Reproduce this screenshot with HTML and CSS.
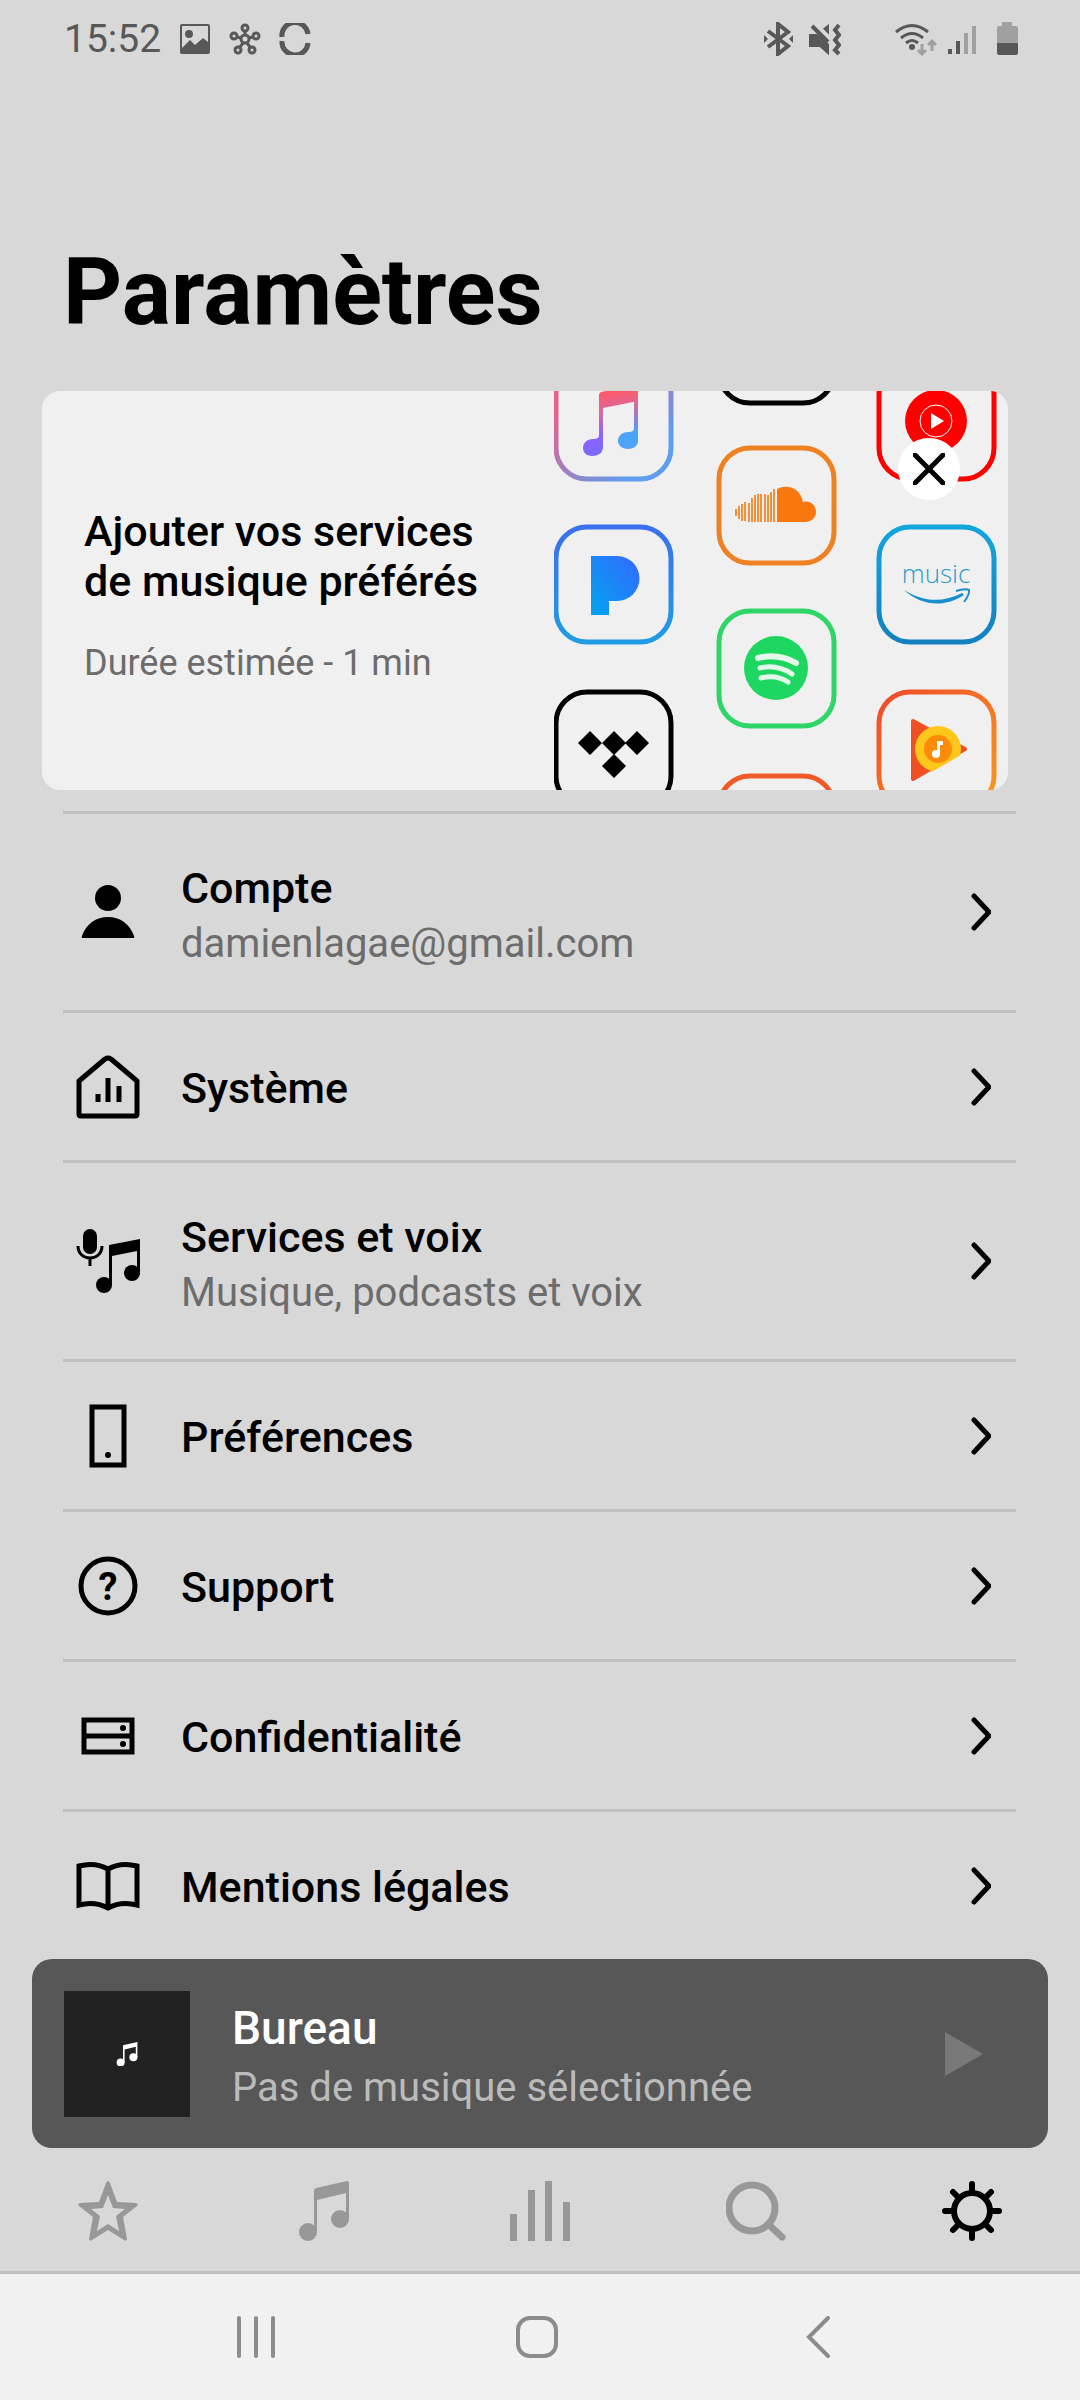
FILE: index.html
```html
<!DOCTYPE html>
<html lang="fr">
<head>
  <meta charset="UTF-8">
  <meta name="viewport" content="width=device-width, initial-scale=1.0">
  <title>Paramètres</title>
  <link rel="stylesheet" href="styles.css">
</head>
<body>
  <header class="status-bar">
    <span class="time">15:52</span>
    <svg width="32" height="32" viewBox="0 0 32 32"><path fill-rule="evenodd" d="M3 1h26a2 2 0 0 1 2 2v26a2 2 0 0 1-2 2H3a2 2 0 0 1-2-2V3a2 2 0 0 1 2-2zm0 2v22l8-8 5 5 8-7 5 4V3z"/><circle cx="10" cy="11" r="4"/></svg>
    <svg class="line" width="32" height="32" viewBox="0 0 32 32" stroke-width="3"><circle cx="16" cy="16" r="4"/><circle cx="16" cy="5" r="3"/><circle cx="5" cy="13" r="3"/><circle cx="27" cy="13" r="3"/><circle cx="9" cy="27" r="3"/><circle cx="23" cy="27" r="3"/><path d="M16 8v4M8 14l4 1M24 14l-4 1M11 24l3-4M21 24l-3-4"/></svg>
    <svg class="line" width="32" height="32" viewBox="0 0 32 32" stroke-width="5"><path d="M3 14a13 13 0 0 1 26-3M3 18a13 13 0 0 0 26 2"/></svg>
    <div class="status-right">
      <svg class="line" width="32" height="34" viewBox="0 0 32 34" stroke-width="4"><path d="M5 9l20 15-10 8V2l10 8L5 25"/><path class="solid" d="M1 13v8l4-4zM30 13v8l-4-4z"/></svg>
      <svg width="32" height="34" viewBox="0 0 32 34"><path d="M0 12h8l4-3 8 8v16l-9-8H0zM12 8l8-6v14z"/><path class="cut" d="M2 1l20 20"/><path d="M0 12h8l12 10v11l-9-8H0z"/><path class="line" stroke-width="4" d="M3 4l16 16M30 3l-4 5 4 5-4 5 4 5-4 5 4 4"/></svg>
      <svg class="wifi" width="39" height="34" viewBox="0 0 39 34"><path class="line" stroke-width="3" d="M1 10q16-13 32 0M6 16q11-9 22 0M11 21q6-5 12 0"/><circle cx="17" cy="25" r="3"/><path class="line faded" stroke-width="3" d="M27 22v9M23 28l4 4 4-4M37 29v-9M33 23l4-4 4 4"/></svg>
      <svg class="line" width="28" height="34" viewBox="0 0 28 34" stroke-width="4"><path d="M2 27v5M10 19v13"/><path class="faded" d="M18 11v21M26 4v28"/></svg>
      <svg width="36" height="34" viewBox="0 0 36 34"><path fill="#a0a0a0" d="M7 6a2 2 0 0 1 2-2h3V0h10v4h4a2 2 0 0 1 2 2v16H7z"/><path d="M7 21h21v10a2 2 0 0 1-2 2H9a2 2 0 0 1-2-2z"/></svg>
    </div>
  </header>

  <main>
    <h1>Paramètres</h1>

    <section class="banner">
      <div class="banner-text">
        <h2>Ajouter vos services<br>de musique préférés</h2>
        <p>Durée estimée - 1 min</p>
      </div>
      <svg class="services" width="454" height="399" viewBox="0 0 454 399">
        <defs>
          <linearGradient id="apple-frame" x1="0" y1="0" x2="1" y2="1"><stop offset=".2" stop-color="#e8608c"/><stop offset=".8" stop-color="#5f9dee"/></linearGradient>
          <linearGradient id="apple-note" gradientUnits="userSpaceOnUse" x1="50" y1="0" x2="60" y2="62"><stop offset="0" stop-color="#ff5b62"/><stop offset=".35" stop-color="#d967a4"/><stop offset=".7" stop-color="#8b64ff"/><stop offset="1" stop-color="#7a6aff"/></linearGradient>
          <linearGradient id="apple-right" gradientUnits="userSpaceOnUse" x1="0" y1="5" x2="0" y2="55"><stop offset="0" stop-color="#f26378"/><stop offset=".6" stop-color="#6a90f0"/><stop offset="1" stop-color="#4da3f8"/></linearGradient>
          <linearGradient id="pandora" x1="1" y1="0" x2="0" y2="1"><stop offset="0" stop-color="#3668ff"/><stop offset="1" stop-color="#00a5ee"/></linearGradient>
          <linearGradient id="pandora-frame" x1="0" y1="0" x2="0" y2="1"><stop offset="0" stop-color="#3b70ee"/><stop offset="1" stop-color="#1f9ce4"/></linearGradient>
          <linearGradient id="amazon" x1="0" y1="0" x2="0" y2="1"><stop offset="0" stop-color="#12a6dc"/><stop offset="1" stop-color="#1480c0"/></linearGradient>
          <linearGradient id="play-frame" x1="0" y1="0" x2="1" y2="1"><stop offset="0" stop-color="#ee4a2c"/><stop offset="1" stop-color="#fb9a1c"/></linearGradient>
          <clipPath id="play-clip"><path d="M357 310h62v47l-62 36z"/></clipPath>
        </defs>

        <!-- first column -->
        <rect class="tile" x="2" y="-27" width="115" height="115" rx="31" stroke="url(#apple-frame)"/>
        <path fill="url(#apple-note)" d="M45 4q0-2 2-3l5-1h32v10L49 17v40h-4z"/>
        <path fill="url(#apple-right)" d="M80 0h4v50h-4z"/>
        <path fill="url(#apple-note)" d="M49 48v8c0 6-5 9-11 9-5 0-9-3-9-8s4-9 10-9c4 0 6-1 6-4z"/>
        <path fill="#4da3f8" d="M84 38v12c0 5-5 8-10 8s-10-3-10-8 4-9 10-9c4 0 6-1 6-4z"/>
        <rect class="tile" x="2" y="136" width="115" height="115" rx="31" stroke="url(#pandora-frame)"/>
        <path fill="url(#pandora)" d="M37 165h26a22 22 0 0 1 0 45h-8v14H37z"/>
        <rect class="tile" x="2" y="301" width="115" height="115" rx="31" stroke="#000"/>
        <path d="M36 340l12 12-12 12-12-12zM60 340l12 12-12 12-12-12zM83 340l12 12-12 12-12-12zM60 363l12 12-12 12-12-12z"/>

        <!-- second column -->
        <rect class="tile" x="165" y="-103" width="115" height="115" rx="31" stroke="#000"/>
        <rect class="tile" x="165" y="57" width="115" height="115" rx="31" stroke="#ee8122"/>
        <path fill="#f8770f" d="M223 98c11-6 24 0 26 13 7-2 13 3 13 10 0 6-5 10-11 10h-28z"/>
        <path fill="none" stroke="#f8770f" stroke-width="2" opacity=".8" d="M182 118v7M185 115v13M188 113v17M191 111v19M195 112v19M198 107v24M201 104v27M204 103v28M207 103v28M211 103v28M214 104v27M217 101v30M220 98v33"/>
        <rect class="tile" x="165" y="220" width="115" height="115" rx="31" stroke="#2fd566"/>
        <circle cx="222" cy="277" r="32" fill="#1ed760"/>
        <path fill="none" stroke="#e4f7ea" stroke-linecap="round" stroke-width="6" d="M204 267q20-5 38 5"/>
        <path fill="none" stroke="#e4f7ea" stroke-linecap="round" stroke-width="5" d="M206 277q17-4 32 6M207 287q15-4 27 4"/>
        <rect class="tile" x="165" y="385" width="115" height="115" rx="31" stroke="#f05a28"/>

        <!-- third column -->
        <rect class="tile" x="325" y="-27" width="115" height="115" rx="31" stroke="#f00"/>
        <circle cx="382" cy="30" r="31" fill="#f00"/>
        <circle cx="382" cy="30" r="16" fill="none" stroke="#fff"/>
        <path fill="#fff" d="M377 22v16l13-8z"/>
        <rect class="tile" x="325" y="136" width="115" height="115" rx="31" stroke="url(#amazon)"/>
        <text class="amazon-name" x="382" y="192">music</text>
        <path fill="#168fcb" d="M350 199c19 12 39 13 58 3l2 2c-20 13-42 11-60-5z"/>
        <path fill="none" stroke="#168fcb" stroke-width="2" d="M402 200q9-3 13-1 1 4-5 12"/>
        <rect class="tile" x="325" y="301" width="115" height="115" rx="31" stroke="url(#play-frame)"/>
        <path fill="#f04e23" stroke="#f04e23" stroke-linejoin="round" stroke-width="4" d="M359 330l52 28-52 30z"/>
        <g clip-path="url(#play-clip)">
          <circle cx="384" cy="358" r="23" fill="#ffc61c"/>
          <circle cx="384" cy="358" r="14" fill="#fb8c0a"/>
        </g>
        <circle cx="382" cy="363" r="4" fill="#fff"/>
        <path fill="#fff" d="M383 350h6v4h-3v9h-3z"/>
      </svg>
      <button class="close" aria-label="Fermer">
        <svg width="32" height="32" viewBox="0 0 32 32"><path d="M2 2l28 28M30 2L2 30"/></svg>
      </button>
    </section>

    <nav class="settings">
      <a href="#compte" class="row tall">
        <svg class="icon" viewBox="0 0 64 64"><circle cx="32" cy="18" r="13"/><path d="M7 58q-2 0-1-2c4-12 14-19 26-19s22 7 26 19q1 2-1 2z"/></svg>
        <span class="label">Compte<small>damienlagae@gmail.com</small></span>
        <svg class="chevron" viewBox="0 0 20 38"><path d="M3 3l15 16L3 35"/></svg>
      </a>
      <a href="#systeme" class="row">
        <svg class="icon outline" viewBox="0 0 64 64"><path d="M3 26L29 4q3-2 6 0l26 22v33q0 2-2 2H5q-2 0-2-2z"/><path d="M22 39v8M32 23v24M43 31v16"/></svg>
        <span class="label">Système</span>
        <svg class="chevron" viewBox="0 0 20 38"><path d="M3 3l15 16L3 35"/></svg>
      </a>
      <a href="#services" class="row tall">
        <svg class="icon" viewBox="0 0 64 64"><rect x="7" y="0" width="14" height="25" rx="7"/><path class="thin" d="M2 17c0 16 24 16 24 0M14 29v8"/><path d="M33 16l31-6v33h-3V22l-25 5v29h-3z"/><circle cx="28" cy="56" r="8"/><circle cx="56" cy="44" r="8"/></svg>
        <span class="label">Services et voix<small>Musique, podcasts et voix</small></span>
        <svg class="chevron" viewBox="0 0 20 38"><path d="M3 3l15 16L3 35"/></svg>
      </a>
      <a href="#preferences" class="row">
        <svg class="icon outline" viewBox="0 0 64 64"><path stroke-linejoin="miter" d="M16 3h32v58H16z"/><circle class="dot" cx="32" cy="51" r="3"/></svg>
        <span class="label">Préférences</span>
        <svg class="chevron" viewBox="0 0 20 38"><path d="M3 3l15 16L3 35"/></svg>
      </a>
      <a href="#support" class="row">
        <svg class="icon outline" viewBox="0 0 64 64"><circle cx="32" cy="32" r="27"/><text class="question" x="32" y="46">?</text></svg>
        <span class="label">Support</span>
        <svg class="chevron" viewBox="0 0 20 38"><path d="M3 3l15 16L3 35"/></svg>
      </a>
      <a href="#confidentialite" class="row">
        <svg class="icon outline" viewBox="0 0 64 64"><path stroke-linejoin="miter" d="M8 16h48v32H8zM8 32h48"/><circle class="dot" cx="47" cy="24" r="3"/><circle class="dot" cx="47" cy="40" r="3"/></svg>
        <span class="label">Confidentialité</span>
        <svg class="chevron" viewBox="0 0 20 38"><path d="M3 3l15 16L3 35"/></svg>
      </a>
      <a href="#mentions" class="row">
        <svg class="icon outline" viewBox="0 0 64 64"><path stroke-linejoin="miter" d="M32 15C23 10 14 9 3 12v39c11-3 20-2 29 3 9-5 18-6 29-3V12c-11-3-20-2-29 3z"/><path d="M32 15v38"/></svg>
        <span class="label">Mentions légales</span>
        <svg class="chevron" viewBox="0 0 20 38"><path d="M3 3l15 16L3 35"/></svg>
      </a>
    </nav>
  </main>

  <section class="player">
    <div class="cover">
      <svg width="22" height="24" viewBox="0 0 52 60"><path d="M16 8l36-8v38h-4V12l-28 7v32h-4z"/><circle cx="10" cy="51" r="10"/><circle cx="42" cy="38" r="10"/></svg>
    </div>
    <div class="track">
      <strong>Bureau</strong>
      <span>Pas de musique sélectionnée</span>
    </div>
    <button class="play" aria-label="Lecture">
      <svg width="38" height="44" viewBox="0 0 38 44"><path d="M0 0l38 22L0 44z"/></svg>
    </button>
  </section>

  <nav class="tabs">
    <a href="#favoris" aria-label="Favoris"><svg width="60" height="60" viewBox="0 0 60 60"><path fill-rule="evenodd" d="M30 0q1 0 2 2l7 19 19 1q3 1 1 3L45 36l4 22q-1 3-3 1L30 49 14 59q-2 2-3-1l4-22L1 25q-2-2 1-3l19-1 7-19q1-2 2-2zm0 14l-5 13-12 1 9 7-3 15 11-7 11 7-3-15 9-7-12-1z"/></svg></a>
    <a href="#musique" aria-label="Musique"><svg width="52" height="60" viewBox="0 0 52 60"><path d="M16 9q0-1 2-2L49 0q2 0 2 2v36h-3V12L19 19v32h-3z"/><circle cx="10" cy="51" r="9"/><circle cx="42" cy="38" r="9"/></svg></a>
    <a href="#pieces" aria-label="Pièces"><svg width="60" height="60" viewBox="0 0 60 60"><path d="M0 33h7v27H0zM18 9h7v51h-7zM35 0h7v60h-7zM53 21h7v39h-7z"/></svg></a>
    <a href="#recherche" aria-label="Rechercher"><svg class="search" width="60" height="60" viewBox="0 0 60 60"><circle cx="26" cy="27" r="23"/><path d="M42 43l14 13"/></svg></a>
    <a href="#parametres" aria-label="Paramètres" class="active"><svg class="gear" width="60" height="60" viewBox="0 0 60 60"><circle cx="30" cy="30" r="18"/><path d="M30 3v7M30 50v7M3 30h7M50 30h7M11 11l5 5M44 44l5 5M49 11l-5 5M11 49l5-5"/></svg></a>
  </nav>

  <footer class="system-nav">
    <button aria-label="Applications récentes"><svg width="40" height="42" viewBox="0 0 40 42"><path d="M3 2v38M20 2v38M37 2v38"/></svg></button>
    <button aria-label="Accueil"><svg width="44" height="44" viewBox="0 0 44 44"><rect x="3" y="3" width="38" height="38" rx="12"/></svg></button>
    <button aria-label="Retour"><svg width="24" height="42" viewBox="0 0 24 42"><path d="M22 2L3 21l19 19"/></svg></button>
  </footer>
</body>
</html>
```
FILE: styles.css
```css
* {
  box-sizing: border-box;
}

body {
  margin: 0;
  min-height: 100vh;
  display: flex;
  flex-direction: column;
  background: #d8d8d8;
  color: #000;
  font-family: Roboto, "Liberation Sans", sans-serif;
}

svg {
  display: block;
  flex: none;
}

button {
  padding: 0;
  border: none;
  background: none;
  cursor: pointer;
}

a {
  color: inherit;
  text-decoration: none;
}

/* Status bar */
.status-bar {
  display: flex;
  align-items: center;
  gap: 18px;
  height: 78px;
  padding: 0 54px 0 64px;
  color: #585858;
  fill: #585858;
}

.time {
  font-size: 39px;
}

.status-bar .line {
  fill: none;
  stroke: #585858;
}

.status-bar .faded {
  stroke: #a0a0a0;
}

.status-bar .solid {
  fill: #585858;
  stroke: none;
}

.status-bar .cut {
  stroke: #d8d8d8;
  stroke-width: 9px;
}

.status-right {
  display: flex;
  gap: 14px;
  margin-left: auto;
}

.wifi {
  margin-left: 40px;
  overflow: visible;
}

/* Title */
h1 {
  margin: 161px 63px 44px;
  font-size: 92px;
  line-height: 108px;
  font-weight: 700;
}

/* Banner */
.banner {
  position: relative;
  display: flex;
  align-items: center;
  justify-content: space-between;
  margin: 0 72px 21px 42px;
  border-radius: 18px;
  background: #f0f0f0;
  overflow: hidden;
}

.banner-text {
  padding: 8px 0 0 42px;
}

.banner h2 {
  margin: 0 0 36px;
  font-size: 43px;
  line-height: 50px;
  font-weight: 500;
}

.banner p {
  margin: 0;
  font-size: 36px;
  line-height: 42px;
  color: #6c6c6c;
}

.tile {
  fill: none;
  stroke-width: 5px;
}

.amazon-name {
  font-family: "Open Sans", sans-serif;
  font-size: 26px;
  font-weight: 300;
  text-anchor: middle;
  fill: #2b9ccb;
}

.close {
  position: absolute;
  top: 47px;
  right: 48px;
  display: grid;
  place-items: center;
  width: 62px;
  height: 62px;
  border-radius: 50%;
  background: #fff;
}

.close svg {
  stroke: #000;
  stroke-width: 5px;
  stroke-linecap: round;
}

/* Settings list */
.settings {
  margin: 0 64px 0 63px;
}

.row {
  display: flex;
  align-items: center;
  height: 150px;
  padding: 0 25px 0 13px;
  border-top: 3px solid #c0c0c0;
}

.row.tall {
  height: 199px;
}

.icon {
  width: 64px;
  height: 64px;
}

.outline {
  fill: none;
  stroke: #000;
  stroke-width: 5px;
  stroke-linejoin: round;
}

.thin {
  fill: none;
  stroke: #000;
  stroke-width: 3px;
}

.dot {
  fill: #000;
  stroke: none;
}

.question {
  font-size: 38px;
  font-weight: 700;
  text-anchor: middle;
  fill: #000;
  stroke: none;
}

.label {
  flex: 1;
  padding: 3px 0 0 41px;
  font-size: 43px;
  line-height: 56px;
  font-weight: 500;
}

.tall .label {
  padding-top: 7px;
}

.label small {
  display: block;
  font-size: 40px;
  font-weight: 400;
  color: #6c6c6c;
}

.chevron {
  width: 20px;
  height: 38px;
  fill: none;
  stroke: #000;
  stroke-width: 5px;
  stroke-linecap: round;
}

/* Player */
.player {
  display: flex;
  align-items: center;
  height: 189px;
  margin: 0 32px;
  padding: 0 65px 0 32px;
  border-radius: 20px;
  background: #575757;
}

.cover {
  display: grid;
  place-items: center;
  width: 126px;
  height: 126px;
  background: #222;
}

.cover svg {
  fill: #fff;
}

.track {
  flex: 1;
  padding: 8px 0 0 42px;
}

.track strong,
.track span {
  display: block;
  line-height: 60px;
}

.track strong {
  font-size: 46px;
  font-weight: 500;
  color: #fff;
}

.track span {
  font-size: 40px;
  color: #bbb;
}

.play svg {
  fill: #797979;
}

/* Tabs */
.tabs {
  display: grid;
  grid-template-columns: repeat(5, 1fr);
  height: 126px;
  padding-top: 3px;
  border-bottom: 3px solid #c0c0c0;
}

.tabs a {
  display: grid;
  place-items: center;
  color: #989898;
}

.tabs a.active {
  color: #000;
}

.tabs svg {
  fill: currentColor;
}

.tabs .search,
.tabs .gear {
  fill: none;
  stroke: currentColor;
  stroke-width: 6px;
  stroke-linecap: round;
}

.tabs .search {
  stroke-width: 7px;
}

/* System navigation */
.system-nav {
  flex: 1;
  display: grid;
  grid-template-columns: repeat(3, 1fr);
  min-height: 126px;
  padding: 0 121px 0 115px;
  background: #f1f1f1;
}

.system-nav button {
  display: grid;
  place-items: center;
}

.system-nav svg {
  fill: none;
  stroke: #8c8c8c;
  stroke-width: 4px;
  stroke-linecap: round;
}
```
